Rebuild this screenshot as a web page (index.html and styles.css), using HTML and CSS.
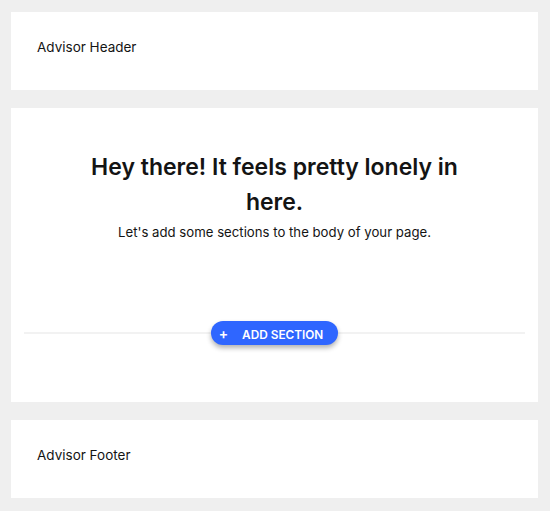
FILE: index.html
```html
<!DOCTYPE html>
<html lang="en">
<head>
    <meta charset="UTF-8">
    <meta name="viewport" content="width=device-width, initial-scale=1.0">
    <title>Advisor Page</title>
    <link rel="stylesheet" href="styles.css">
</head>
<body>

    <!-- Header section -->
    <div class="panel panel-small">
        <p class="panel-label">Advisor Header</p>
    </div>

    <!-- Empty body -->
    <div class="panel panel-body">
        <div class="empty-state">
            <h2>Hey there! It feels pretty lonely in here.</h2>
            <p>Let's add some sections to the body of your page.</p>
        </div>
        <div class="add-row">
            <button class="add-button" type="button"><span class="plus">+</span>ADD SECTION</button>
        </div>
    </div>

    <!-- Footer section -->
    <div class="panel panel-small">
        <p class="panel-label">Advisor Footer</p>
    </div>

</body>
</html>
```

FILE: styles.css
```css
/* Page */
body {
    margin: 0;
    padding: 12px 12px 12px 11px;
    background-color: #efefef;
    color: #141414;
    font-family: Inter, "Open Sans", sans-serif;
    display: flex;
    flex-direction: column;
    gap: 18px;
}

/* White panels */
.panel {
    background-color: white;
}

.panel-small {
    height: 78px;
    box-sizing: border-box;
    padding: 26px 26px 0;
}

.panel-label {
    margin: 0;
    font-size: 13.5px;
    line-height: 18px;
}

/* Empty body panel */
.panel-body {
    height: 294px;
    padding: 0 13px;
}

.empty-state {
    text-align: center;
    padding-top: 42px;
}

.empty-state h2 {
    max-width: 400px;
    margin: 0 auto;
    font-size: 23px;
    font-weight: 600;
    line-height: 35px;
}

.empty-state p {
    margin: 4px 0 0;
    font-size: 13.2px;
}

/* Divider with button */
.add-row {
    margin-top: 92px;
    height: 2px;
    background-color: #f2f2f2;
    display: flex;
    justify-content: center;
    align-items: center;
}

.add-button {
    height: 24px;
    padding: 0 15px 0 8px;
    border: none;
    border-radius: 12px;
    background-color: #2f66ff; /* Blue button */
    color: white;
    font-family: inherit;
    font-size: 11.8px;
    font-weight: 600;
    box-shadow: 0 3px 5px rgba(0, 0, 0, 0.3);
    cursor: pointer;
}

.plus {
    font-size: 14px;
    margin-right: 14px;
}
```
